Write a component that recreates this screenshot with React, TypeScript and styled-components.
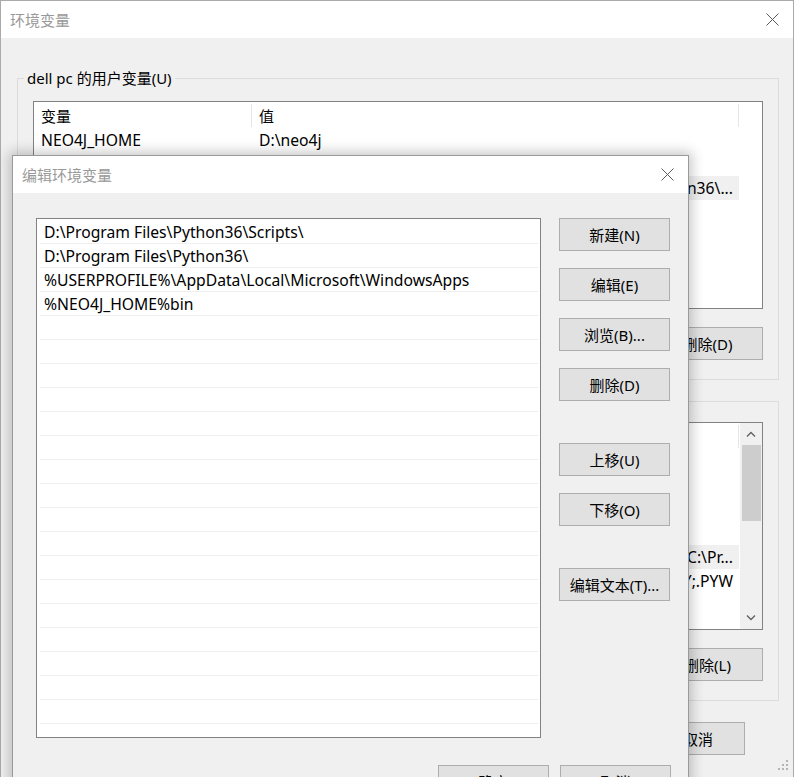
import React from "react";
import styled, { createGlobalStyle } from "styled-components";

const Global = createGlobalStyle`
  html, body { margin: 0; padding: 0; background: #f0f0f0; }
  body {
    font-family: "Noto Sans", "Noto Sans CJK SC", sans-serif;
    font-size: 15px;
    color: #000;
  }
  * { box-sizing: border-box; }
`;

const Desktop = styled.div`
  position: relative;
  width: 794px;
  height: 777px;
  overflow: hidden;
  background: #f0f0f0;
`;

const Window = styled.div`
  position: relative;
  width: 794px;
  height: 777px;
  border: 1px solid #aaaaaa;
  border-bottom: none;
  background: #f0f0f0;
  display: flex;
  flex-direction: column;
`;

const TitleBar = styled.div<{ $padRight: number }>`
  height: 37px;
  flex: none;
  background: #fff;
  display: flex;
  align-items: center;
  justify-content: space-between;
  padding: 0 ${(p) => p.$padRight}px 0 9px;
  color: #999;
  font-size: 15px;
  line-height: 20px;
`;

const CloseIcon = () => (
  <svg width="13" height="13" viewBox="0 0 13 13">
    <path d="M0.5 0.5 L12.5 12.5 M12.5 0.5 L0.5 12.5" stroke="#5a5a5a" strokeWidth="1" fill="none" />
  </svg>
);

const Body = styled.div`
  display: flex;
  flex-direction: column;
  padding: 30px 14px 0 16px;
`;

const Group = styled.fieldset<{ $mt: number }>`
  margin: ${(p) => p.$mt}px 0 0 0;
  border: 1px solid #dcdcdc;
  padding: 0 15px 19px 15px;
  min-width: 0;
  display: flex;
  flex-direction: column;
`;

const Legend = styled.legend`
  padding: 0 3px;
  margin-left: -9px;
  line-height: 20px;
  height: 20px;
  font-size: 15px;
  color: #000;
`;

const ListBox = styled.div<{ $mt: number; $h: number }>`
  margin-top: ${(p) => p.$mt}px;
  height: ${(p) => p.$h}px;
  border: 1px solid #828282;
  background: #fff;
  display: flex;
  overflow: hidden;
`;

const ListMain = styled.div`
  flex: 1;
  min-width: 0;
  display: flex;
  flex-direction: column;
`;

const HeaderRow = styled.div`
  height: 26px;
  flex: none;
  display: flex;
  align-items: stretch;
`;

const HeaderCell = styled.div<{ $w: number }>`
  width: ${(p) => p.$w}px;
  flex: none;
  padding-left: 7px;
  display: flex;
  align-items: center;
  border-right: 1px solid #e5e5e5;
  margin: 2px 0 1px 0;
  white-space: nowrap;
`;

const VarRow = styled.div<{ $sel?: boolean }>`
  height: 24px;
  flex: none;
  display: flex;
  width: 705px;
  background: ${(p) => (p.$sel ? "#f0f0f0" : "transparent")};
`;

const VarCell = styled.div<{ $w: number; $end?: boolean }>`
  width: ${(p) => p.$w}px;
  flex: none;
  padding: 0 6px 0 7px;
  display: flex;
  align-items: center;
  justify-content: ${(p) => (p.$end ? "flex-end" : "flex-start")};
  overflow: hidden;
  white-space: nowrap;
  font-size: 15.7px;
`;

const ScrollBar = styled.div`
  width: 22px;
  flex: none;
  background: #f0f0f0;
  display: flex;
  flex-direction: column;
  align-items: center;
`;

const ScrollArrow = styled.div`
  height: 22px;
  width: 100%;
  display: flex;
  align-items: center;
  justify-content: center;
  flex: none;
`;

const ScrollThumb = styled.div`
  width: 19px;
  height: 76px;
  background: #cdcdcd;
  flex: none;
`;

const ScrollTrack = styled.div`
  flex: 1;
`;

const Chevron = ({ up }: { up?: boolean }) => (
  <svg width="10" height="6" viewBox="0 0 10 6">
    <path
      d={up ? "M1 5.5 L5 1.5 L9 5.5" : "M1 0.5 L5 4.5 L9 0.5"}
      stroke="#606060"
      strokeWidth="1.3"
      fill="none"
    />
  </svg>
);

const ButtonRow = styled.div<{ $mt: number; $mr?: number }>`
  margin-top: ${(p) => p.$mt}px;
  margin-right: ${(p) => p.$mr ?? 0}px;
  display: flex;
  justify-content: flex-end;
  gap: 11px;
`;

const Btn = styled.button<{ $w?: number; $mt?: number }>`
  width: ${(p) => p.$w ?? 111}px;
  height: 33px;
  flex: none;
  margin-top: ${(p) => p.$mt ?? 0}px;
  background: #e1e1e1;
  border: 1px solid #adadad;
  border-radius: 0;
  padding: 0;
  font-family: inherit;
  font-size: 15px;
  color: #000;
  display: flex;
  align-items: center;
  justify-content: center;
  white-space: nowrap;
`;

const Grip = styled.div`
  position: absolute;
  right: 4px;
  bottom: 2px;
`;

const GripIcon = () => (
  <svg width="11" height="11" viewBox="0 0 11 11">
    {[
      [8, 0],
      [4, 4],
      [8, 4],
      [0, 8],
      [4, 8],
      [8, 8],
    ].map(([x, y], i) => (
      <rect key={i} x={x} y={y} width="2" height="2" fill="#b4b4b4" />
    ))}
  </svg>
);

/* Front dialog */
const Dialog = styled.div`
  position: absolute;
  left: 12px;
  top: 155px;
  width: 677px;
  height: 660px;
  border: 1px solid #9a9a9a;
  background: #f0f0f0;
  box-shadow: 0 0 12px 3px rgba(0, 0, 0, 0.22);
  display: flex;
  flex-direction: column;
`;

const DialogBody = styled.div`
  display: flex;
  flex-direction: column;
  padding: 25px 17px 0 23px;
`;

const DialogMain = styled.div`
  display: flex;
  gap: 18px;
  align-items: flex-start;
`;

const PathList = styled.div`
  width: 505px;
  height: 520px;
  flex: none;
  border: 1px solid #828282;
  background: #fff;
  padding-top: 1px;
  display: flex;
  flex-direction: column;
`;

const PathRow = styled.div`
  height: 24px;
  flex: none;
  margin: 0 2px 0 3px;
  padding-left: 4px;
  border-bottom: 1px solid #f0f0f0;
  display: flex;
  align-items: center;
  white-space: nowrap;
  overflow: hidden;
  font-size: 15.7px;
`;

const ButtonColumn = styled.div`
  width: 111px;
  flex: none;
  display: flex;
  flex-direction: column;
  gap: 17px;
`;

const userVars: { name: string; value: string; sel?: boolean; end?: boolean }[] = [
  { name: "NEO4J_HOME", value: "D:\\neo4j" },
  { name: "OneDrive", value: "C:\\Users\\dell pc\\OneDrive" },
  {
    name: "Path",
    value: "D:\\Program Files\\Python36\\Scripts\\;D:\\Program Files\\Python36\\...",
    sel: true,
    end: true,
  },
  { name: "TEMP", value: "%USERPROFILE%\\AppData\\Local\\Temp" },
  { name: "TMP", value: "%USERPROFILE%\\AppData\\Local\\Temp" },
];

const sysVars: { name: string; value: string; sel?: boolean; end?: boolean }[] = [
  { name: "ComSpec", value: "C:\\Windows\\system32\\cmd.exe" },
  { name: "DriverData", value: "C:\\Windows\\System32\\Drivers\\DriverData" },
  { name: "NUMBER_OF_PROCESSORS", value: "8" },
  { name: "OS", value: "Windows_NT" },
  {
    name: "Path",
    value: "C:\\Windows\\system32;C:\\Windows;C:\\Windows\\System32\\Wbem;C:\\Pr...",
    sel: true,
    end: true,
  },
  {
    name: "PATHEXT",
    value: ".COM;.EXE;.BAT;.CMD;.VBS;.VBE;.JS;.JSE;.WSF;.WSH;.MSC;.PY;.PYW",
    end: true,
  },
  { name: "PROCESSOR_ARCHITECTURE", value: "AMD64" },
];

const paths = [
  "D:\\Program Files\\Python36\\Scripts\\",
  "D:\\Program Files\\Python36\\",
  "%USERPROFILE%\\AppData\\Local\\Microsoft\\WindowsApps",
  "%NEO4J_HOME%bin",
];

export default function App() {
  const pathRows = Array.from({ length: 21 }, (_, i) => paths[i] ?? "");
  return (
    <>
      <Global />
      <Desktop>
        <Window>
          <TitleBar $padRight={14}>
            <span>环境变量</span>
            <CloseIcon />
          </TitleBar>
          <Body>
            <Group $mt={0}>
              <Legend>dell pc 的用户变量(U)</Legend>
              <ListBox $mt={13} $h={208}>
                <ListMain>
                  <HeaderRow>
                    <HeaderCell $w={218}>变量</HeaderCell>
                    <HeaderCell $w={487}>值</HeaderCell>
                  </HeaderRow>
                  {userVars.map((v) => (
                    <VarRow key={v.name} $sel={v.sel}>
                      <VarCell $w={218}>{v.name}</VarCell>
                      <VarCell $w={487} $end={v.end}>
                        {v.value}
                      </VarCell>
                    </VarRow>
                  ))}
                </ListMain>
              </ListBox>
              <ButtonRow $mt={18}>
                <Btn>新建(N)...</Btn>
                <Btn>编辑(E)...</Btn>
                <Btn>删除(D)</Btn>
              </ButtonRow>
            </Group>
            <Group $mt={11}>
              <Legend>系统变量(S)</Legend>
              <ListBox $mt={11} $h={208}>
                <ListMain>
                  <HeaderRow>
                    <HeaderCell $w={218}>变量</HeaderCell>
                    <HeaderCell $w={487}>值</HeaderCell>
                  </HeaderRow>
                  {sysVars.map((v) => (
                    <VarRow key={v.name} $sel={v.sel}>
                      <VarCell $w={218}>{v.name}</VarCell>
                      <VarCell $w={487} $end={v.end}>
                        {v.value}
                      </VarCell>
                    </VarRow>
                  ))}
                </ListMain>
                <ScrollBar>
                  <ScrollArrow>
                    <Chevron up />
                  </ScrollArrow>
                  <ScrollThumb />
                  <ScrollTrack />
                  <ScrollArrow>
                    <Chevron />
                  </ScrollArrow>
                </ScrollBar>
              </ListBox>
              <ButtonRow $mt={18}>
                <Btn>新建(W)...</Btn>
                <Btn>编辑(I)...</Btn>
                <Btn>删除(L)</Btn>
              </ButtonRow>
            </Group>
            <ButtonRow $mt={21} $mr={34}>
              <Btn $w={94}>确定</Btn>
              <Btn $w={94}>取消</Btn>
            </ButtonRow>
          </Body>
          <Grip>
            <GripIcon />
          </Grip>
        </Window>

        <Dialog>
          <TitleBar $padRight={14}>
            <span>编辑环境变量</span>
            <CloseIcon />
          </TitleBar>
          <DialogBody>
            <DialogMain>
              <PathList>
                {pathRows.map((p, i) => (
                  <PathRow key={i}>{p}</PathRow>
                ))}
              </PathList>
              <ButtonColumn>
                <Btn>新建(N)</Btn>
                <Btn>编辑(E)</Btn>
                <Btn>浏览(B)...</Btn>
                <Btn>删除(D)</Btn>
                <Btn $mt={25}>上移(U)</Btn>
                <Btn>下移(O)</Btn>
                <Btn $mt={25}>编辑文本(T)...</Btn>
              </ButtonColumn>
            </DialogMain>
            <ButtonRow $mt={27}>
              <Btn>确定</Btn>
              <Btn>取消</Btn>
            </ButtonRow>
          </DialogBody>
        </Dialog>
      </Desktop>
    </>
  );
}
